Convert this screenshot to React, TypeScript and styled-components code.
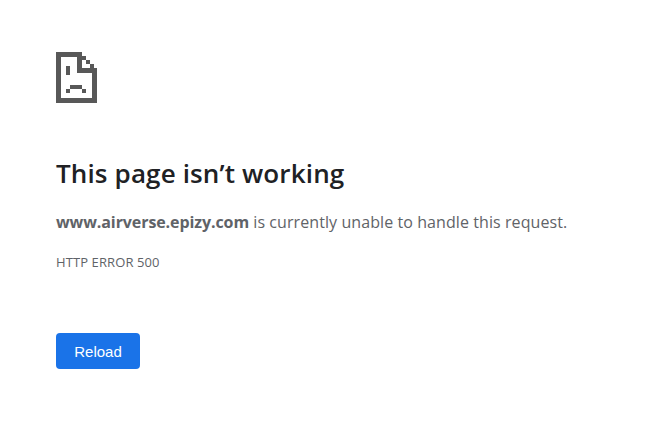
import React from "react";
import styled, { createGlobalStyle } from "styled-components";

const Global = createGlobalStyle`
  html, body { margin: 0; padding: 0; background: #fff; }
  body { font-family: "Open Sans", "Noto Sans", sans-serif; }
`;

const Page = styled.main`
  display: flex;
  flex-direction: column;
  align-items: flex-start;
  width: 661px;
  height: 435px;
  box-sizing: border-box;
  padding: 52px 0 0 56px;
  overflow: hidden;
`;

const Icon = styled.svg`
  display: block;
  width: 41px;
  height: 51px;
  margin-bottom: 51px;
`;

const Title = styled.h1`
  margin: 0 0 18px;
  font-size: 26px;
  line-height: 38px;
  font-weight: 600;
  letter-spacing: 0.14px;
  color: #202124;
`;

const Message = styled.p`
  margin: 0 0 20px;
  font-size: 16px;
  line-height: 24px;
  letter-spacing: 0.08px;
  color: #5f6368;
`;

const Host = styled.strong`
  font-weight: 700;
  letter-spacing: -0.09px;
`;

const Code = styled.div`
  font-size: 13px;
  line-height: 16px;
  letter-spacing: 0.1px;
  color: #5f6368;
  margin-bottom: 63px;
`;

const Reload = styled.button`
  width: 84px;
  height: 36px;
  border: none;
  border-radius: 4px;
  background: #1a73e8;
  color: #fff;
  font-family: "Liberation Sans", Arial, sans-serif;
  font-size: 15px;
  padding: 1px 0 0;
`;

export default function App() {
  return (
    <Page>
      <Global />
      <Icon viewBox="0 0 41 51" shapeRendering="crispEdges" aria-hidden="true">
        <g fill="#585858">
          <rect x="0" y="0" width="25" height="5" />
          <rect x="0" y="0" width="5" height="51" />
          <rect x="0" y="46" width="41" height="5" />
          <rect x="36" y="16" width="5" height="35" />
          <rect x="21" y="0" width="5" height="21" />
          <rect x="21" y="16" width="20" height="5" />
          <rect x="26" y="4" width="4" height="4" />
          <rect x="30" y="8" width="4" height="4" />
          <rect x="34" y="12" width="4" height="4" />
          <rect x="10" y="14" width="4" height="9" />
          <rect x="14" y="33" width="12" height="4" />
          <rect x="10" y="37" width="4" height="4" />
          <rect x="26" y="37" width="4" height="4" />
        </g>
      </Icon>
      <Title>This page isn’t working</Title>
      <Message>
        <Host>www.airverse.epizy.com</Host> is currently unable to handle this request.
      </Message>
      <Code>HTTP ERROR 500</Code>
      <Reload>Reload</Reload>
    </Page>
  );
}
